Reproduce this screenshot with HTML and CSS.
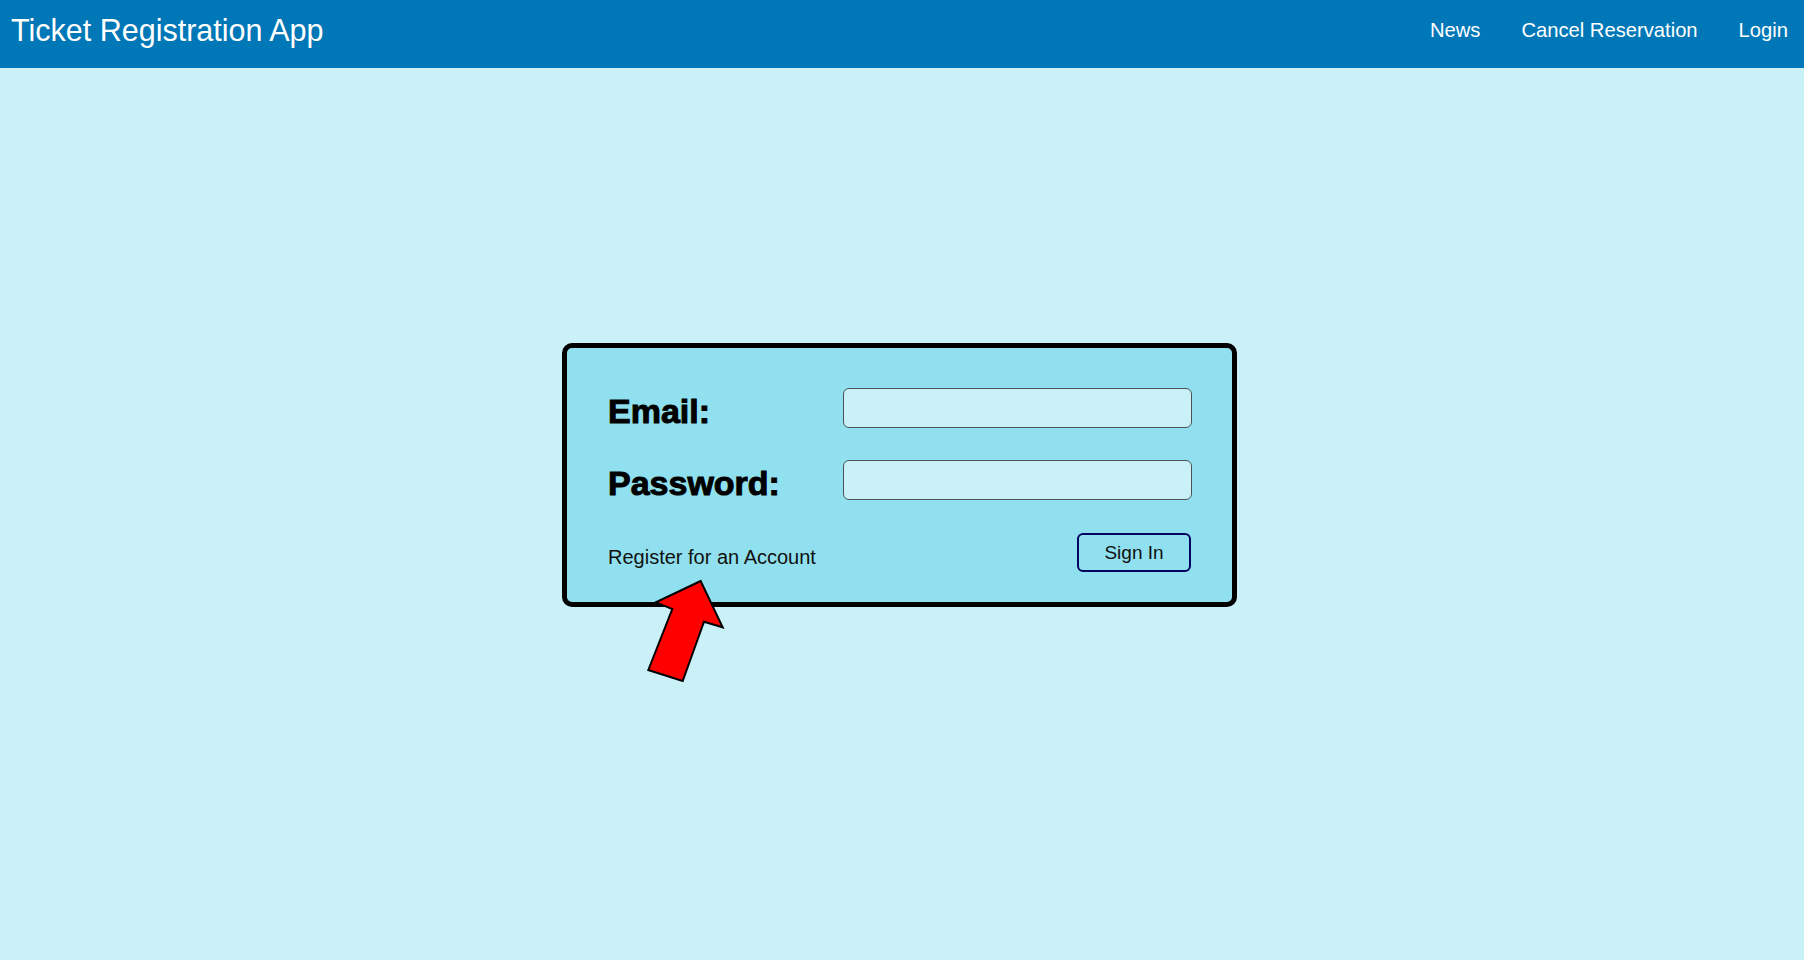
FILE: index.html
```html
<!DOCTYPE html>
<html lang="en">
<head>
<meta charset="utf-8">
<title>Ticket Registration App</title>
<link rel="stylesheet" href="styles.css">
</head>
<body>
<header class="topbar">
  <div class="brand">Ticket Registration App</div>
  <nav class="nav">
    <a class="nav-link" href="#">News</a>
    <a class="nav-link" href="#">Cancel Reservation</a>
    <a class="nav-link" href="#">Login</a>
  </nav>
</header>
<main class="main">
  <form class="card">
    <label class="label" for="email">Email:</label>
    <input class="field" id="email" type="email">
    <label class="label" for="password">Password:</label>
    <input class="field" id="password" type="password">
    <div class="card-footer">
      <a class="register" href="#">Register for an Account</a>
      <button class="signin" type="button">Sign In</button>
    </div>
    <svg class="arrow" width="100" height="120" viewBox="0 0 100 120" aria-hidden="true">
      <polygon points="60.7,11 16,32.3 32.3,39 8.3,100 42.7,111 64,51.7 82.7,57.3" fill="#ff0000" stroke="#000" stroke-width="2" stroke-linejoin="miter"/>
    </svg>
  </form>
</main>
</body>
</html>
```
FILE: styles.css
```css
* { box-sizing: border-box; }

html, body {
  margin: 0;
  padding: 0;
}

body {
  background: #caf0f8;
  font-family: "Liberation Sans", Arial, sans-serif;
  min-height: 960px;
}

.topbar {
  height: 68px;
  background: #0077b6;
  display: flex;
  align-items: center;
  justify-content: space-between;
  padding: 0 16px 0 11px;
  color: #fff;
}

.brand {
  font-size: 30.5px;
  line-height: 1;
  margin-top: -8px;
}

.nav {
  display: flex;
  gap: 41px;
  margin-top: -8px;
}

.nav-link {
  color: #fff;
  text-decoration: none;
  font-size: 20.2px;
}

.main {
  display: flex;
  justify-content: center;
  padding: 275px 5px 0 0;
}

.card {
  position: relative;
  width: 675px;
  background: #90e0ef;
  border: 5px solid #000;
  border-radius: 10px;
  padding: 40px 40px 30px 41px;
  display: grid;
  grid-template-columns: 235px 349px;
  grid-template-rows: 40px 40px auto;
  row-gap: 32px;
  align-items: center;
}

.label {
  align-self: start;
  font-size: 34px;
  font-weight: 700;
  color: #000;
  -webkit-text-stroke: 1px #000;
  line-height: 46px;
  height: 40px;
}

.field {
  height: 40px;
  width: 349px;
  background: #caf0f8;
  border: 1px solid #4a5358;
  border-radius: 6px;
  margin: 0;
}

.card-footer {
  grid-column: 1 / 3;
  display: flex;
  justify-content: space-between;
  align-items: flex-end;
  margin-top: 1px;
  padding-right: 1px;
}

.register {
  color: #111;
  text-decoration: none;
  font-size: 20px;
  line-height: 23px;
  margin-bottom: 3px;
}

.signin {
  width: 114px;
  height: 39px;
  background: transparent;
  border: 2px solid #03045e;
  border-radius: 6px;
  font-family: "Liberation Sans", Arial, sans-serif;
  font-size: 19px;
  color: #111;
  padding: 0;
  margin: 0;
}

.arrow {
  position: absolute;
  left: 73px;
  top: 222px;
  overflow: visible;
}
```
